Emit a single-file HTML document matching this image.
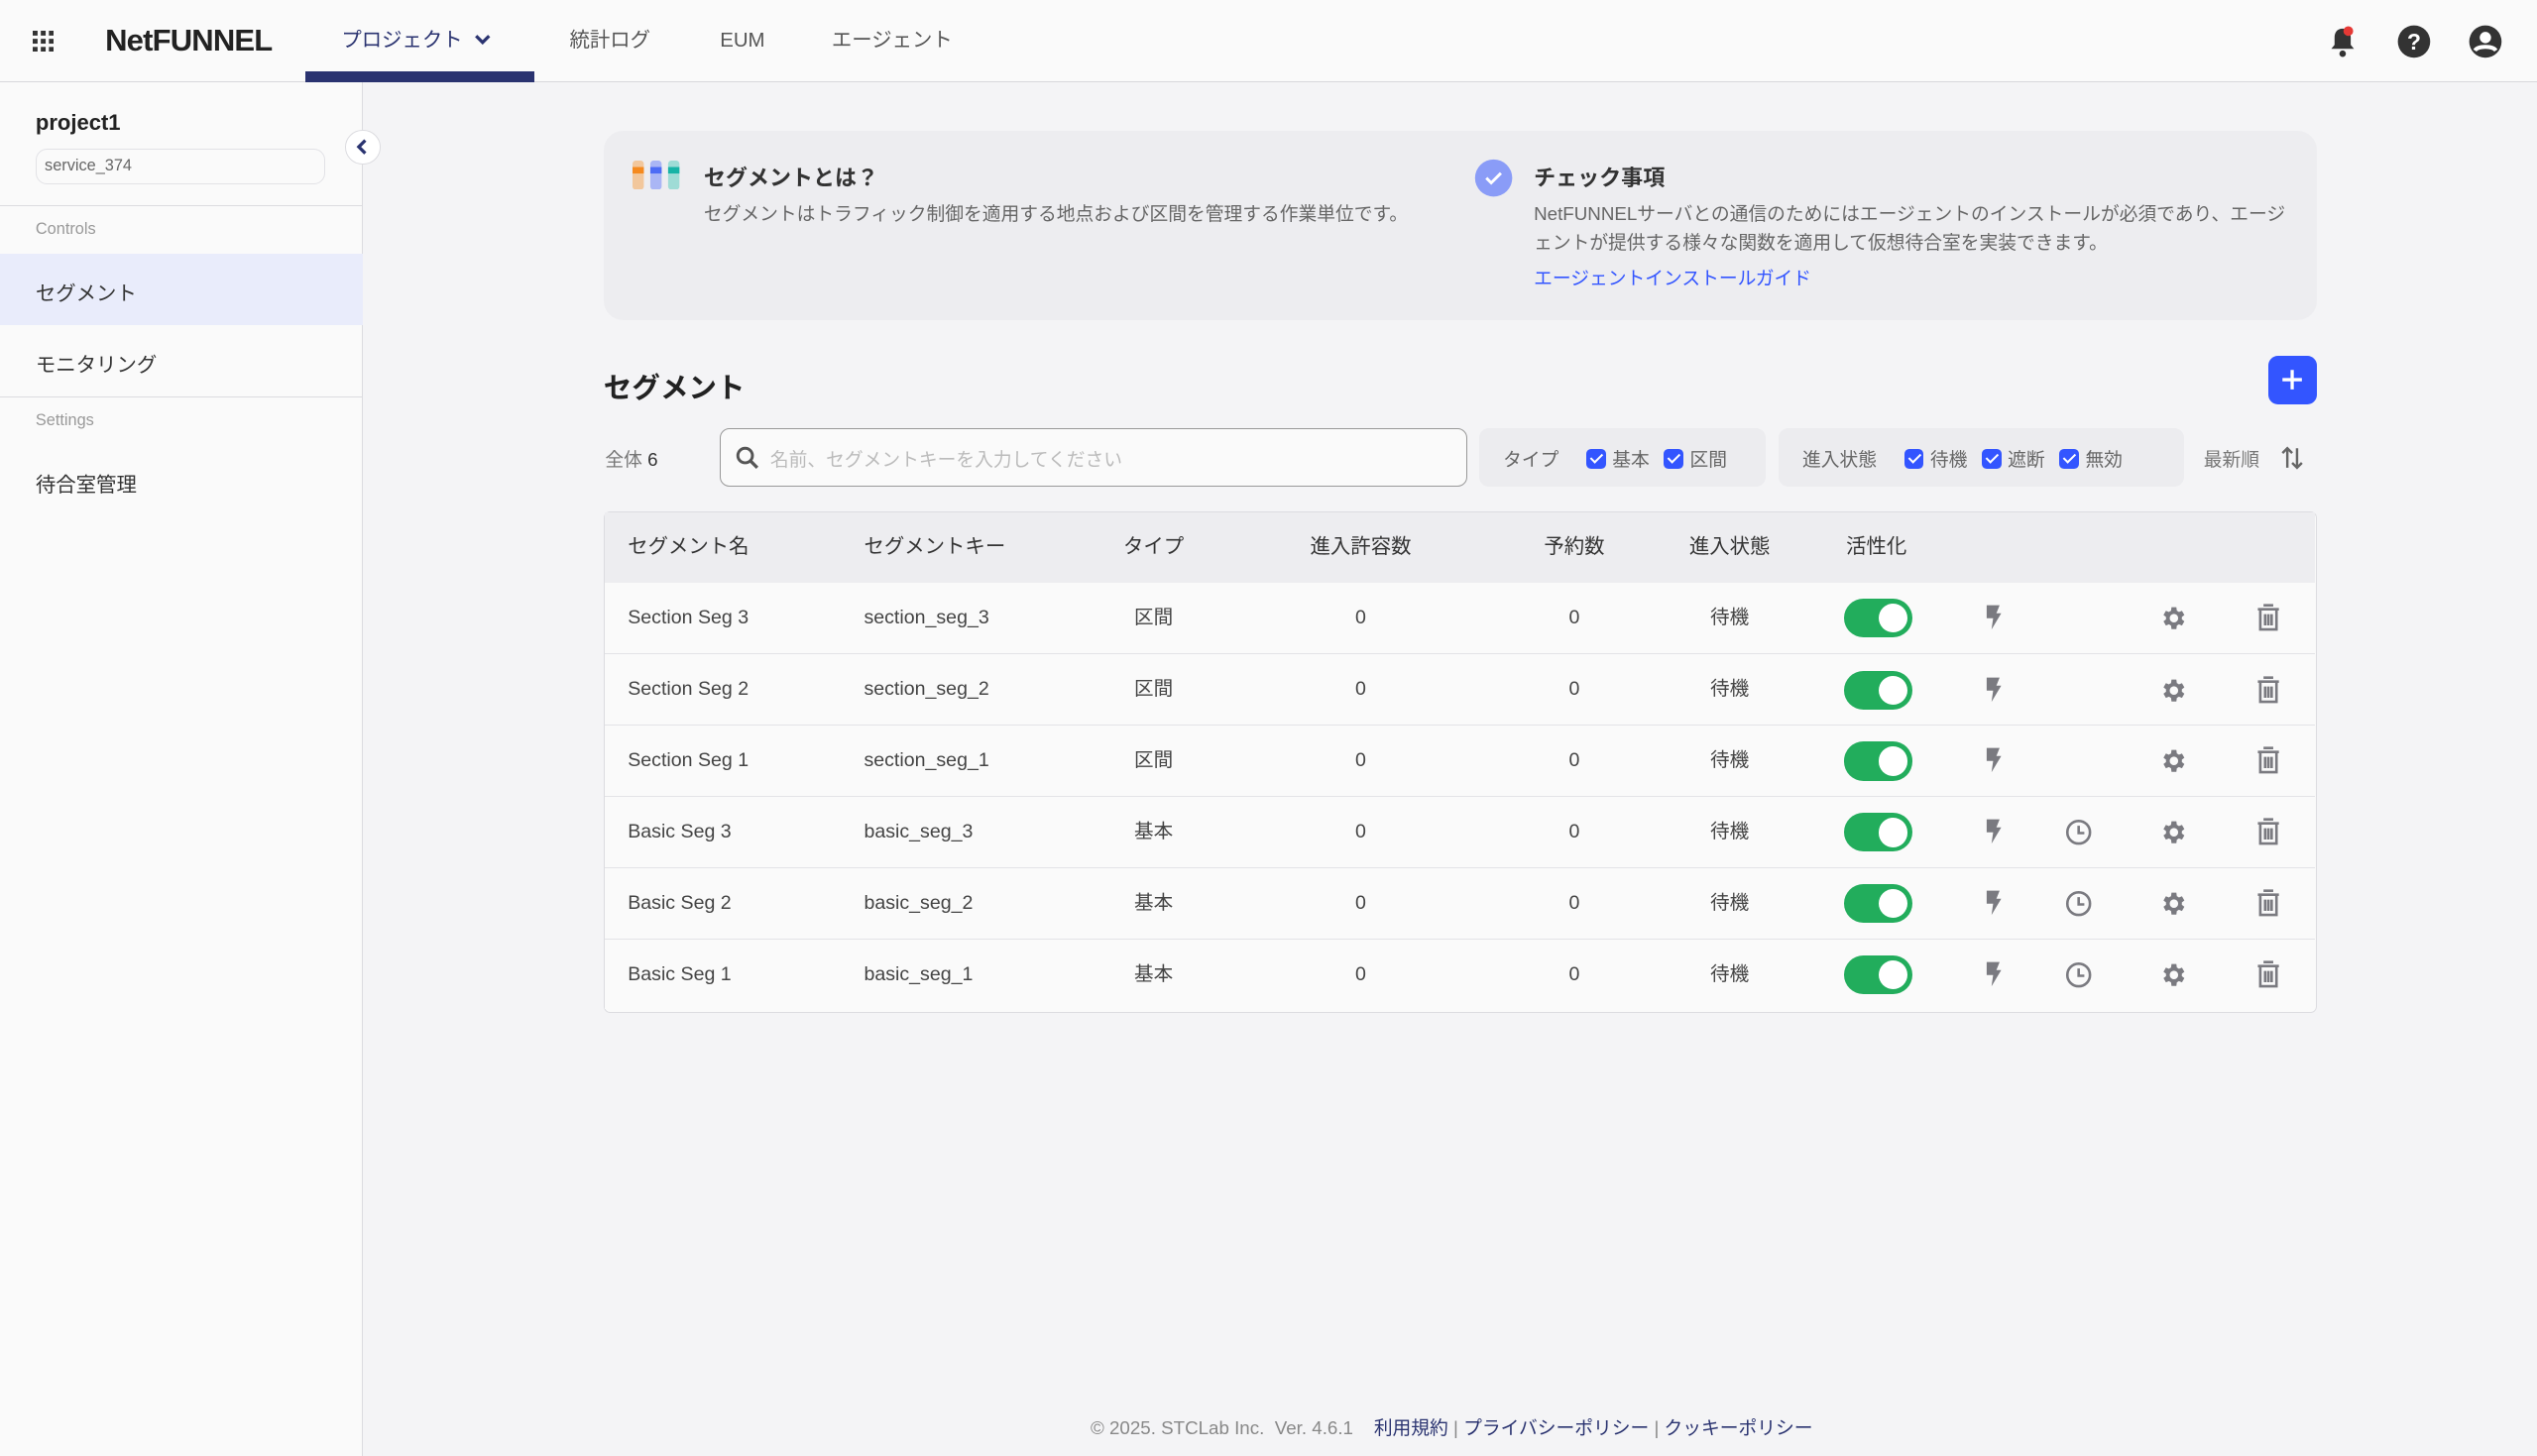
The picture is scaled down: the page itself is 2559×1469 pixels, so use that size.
<!DOCTYPE html>
<html><head><meta charset="utf-8"><style>
*{box-sizing:border-box;margin:0;padding:0}
html,body{width:2559px;height:1469px;overflow:hidden;background:#f4f4f6}
#w{zoom:1.632;width:1568px;height:900px;position:relative;font-family:"Liberation Sans","Noto Sans CJK JP",sans-serif;color:#333;font-size:13px}
.a{position:absolute}
.hdr{left:0;top:0;width:1568px;height:51px;background:#fafafa;border-bottom:1px solid #d8d8dc}
.side{left:0;top:51px;width:224px;height:849px;background:#fafafa;border-right:1px solid #dcdce0}
.nav{font-size:12.5px;color:#555;line-height:16px}
.row{left:374px;width:1057px;height:44px;border-top:1px solid #e3e3e7;background:#fafafa}
.row span{position:absolute;top:0;line-height:44px;font-size:12px;color:#444}
.c{transform:translateX(-50%)}
.tg{position:absolute;left:766px;top:10px;width:42px;height:24px;border-radius:12px;background:#22ad5c}
.tg:after{content:"";position:absolute;right:3px;top:3px;width:18px;height:18px;border-radius:50%;background:#fff}
.ic{position:absolute;top:13px}
.cb{display:inline-block;width:12px;height:12px;border:1.5px solid #3355ff;border-radius:3px;background:#3355ff;vertical-align:-2px;margin:0 4px 0 10px;position:relative}
.cb:after{content:"";position:absolute;left:3px;top:0px;width:3px;height:6px;border:solid #fff;border-width:0 1.3px 1.3px 0;transform:rotate(45deg)}
.th{position:absolute;top:330px;font-size:12.5px;color:#333;line-height:16px}
</style></head><body><div id="w">
<div class="a hdr"></div>
<svg class="a" style="left:20px;top:19px" width="13" height="13"><g fill="#333"><rect x="0" y="0" width="3" height="3"/><rect x="5" y="0" width="3" height="3"/><rect x="10" y="0" width="3" height="3"/><rect x="0" y="5" width="3" height="3"/><rect x="5" y="5" width="3" height="3"/><rect x="10" y="5" width="3" height="3"/><rect x="0" y="10" width="3" height="3"/><rect x="5" y="10" width="3" height="3"/><rect x="10" y="10" width="3" height="3"/></g></svg>
<div class="a" style="left:65px;top:14px;font-size:19px;font-weight:bold;color:#222;letter-spacing:-0.5px">NetFUNNEL</div>
<div class="a nav" style="left:211px;top:17px;color:#2a3370">プロジェクト</div>
<svg class="a" style="left:292px;top:20px" width="12" height="10"><path d="M2 2l4 4 4-4" stroke="#2a3370" stroke-width="2" fill="none"/></svg>
<div class="a" style="left:189px;top:44px;width:141px;height:7px;background:#2a3370"></div>
<div class="a nav" style="left:352px;top:17px">統計ログ</div>
<div class="a nav" style="left:445px;top:17px">EUM</div>
<div class="a nav" style="left:514px;top:17px">エージェント</div>
<svg class="a" style="left:1437px;top:15px" width="22" height="22"><path d="M11 3c-3.5 0-5 2.5-5 5.5v4.5l-2 2.5h14l-2-2.5V8.5C16 5.5 14.5 3 11 3z" fill="#333"/><circle cx="11" cy="18.5" r="2" fill="#333"/><circle cx="14.5" cy="4.5" r="3" fill="#e53935"/></svg>
<svg class="a" style="left:1481px;top:15px" width="22" height="22"><circle cx="11" cy="11" r="10" fill="#333"/><text x="11" y="16" font-size="14" font-weight="bold" fill="#fff" text-anchor="middle" font-family="Liberation Sans">?</text></svg>
<svg class="a" style="left:1525px;top:15px" width="22" height="22"><circle cx="11" cy="11" r="10" fill="#333"/><circle cx="11" cy="8.5" r="3.5" fill="#fff"/><path d="M4.5 16.5c2-3 11-3 13 0" stroke="#fff" stroke-width="2.4" fill="none"/></svg>

<div class="a side"></div>
<div class="a" style="left:22px;top:68px;font-size:13.5px;font-weight:bold;color:#222">project1</div>
<div class="a" style="left:22px;top:92px;width:179px;height:22px;border:1px solid #e2e2e6;border-radius:7px;font-size:10px;color:#666;padding:4px 5px">service_374</div>
<div class="a" style="left:213px;top:80px;width:22px;height:22px;border-radius:50%;border:1px solid #dcdce0;background:#fff"></div>
<svg class="a" style="left:219px;top:86px" width="10" height="10"><path d="M7 1L3 5l4 4" stroke="#2a3370" stroke-width="2" fill="none"/></svg>
<div class="a" style="left:0;top:127px;width:224px;border-top:1px solid #dcdce0"></div>
<div class="a" style="left:22px;top:136px;font-size:10px;color:#999">Controls</div>
<div class="a" style="left:0;top:157px;width:224px;height:44px;background:#e9ecfb"></div>
<div class="a" style="left:22px;top:171px;font-size:12.5px;color:#333">セグメント</div>
<div class="a" style="left:22px;top:215px;font-size:12.5px;color:#333">モニタリング</div>
<div class="a" style="left:0;top:245px;width:224px;border-top:1px solid #dcdce0"></div>
<div class="a" style="left:22px;top:254px;font-size:10px;color:#999">Settings</div>
<div class="a" style="left:22px;top:289px;font-size:12.5px;color:#333">待合室管理</div>

<div class="a" style="left:373px;top:81px;width:1059px;height:117px;background:#ededf0;border-radius:12px"></div>
<svg class="a" style="left:391px;top:99px" width="30" height="18"><rect x="0" y="0" width="7" height="18" rx="2" fill="#f2c79c"/><rect x="0" y="4" width="7" height="4" fill="#f58a1f"/><rect x="11" y="0" width="7" height="18" rx="2" fill="#aab6f5"/><rect x="11" y="4" width="7" height="4" fill="#4d6cf5"/><rect x="22" y="0" width="7" height="18" rx="2" fill="#9fdcd6"/><rect x="22" y="4" width="7" height="4" fill="#18b3a6"/></svg>
<div class="a" style="left:435px;top:99px;font-size:13.5px;font-weight:bold;color:#333">セグメントとは？</div>
<div class="a" style="left:435px;top:123px;font-size:11.5px;color:#666">セグメントはトラフィック制御を適用する地点および区間を管理する作業単位です。</div>
<svg class="a" style="left:911px;top:98px" width="24" height="24"><circle cx="12" cy="12" r="11.5" fill="#8a9cf7"/><path d="M7.5 12l3 3 6-6" stroke="#fff" stroke-width="1.8" fill="none"/></svg>
<div class="a" style="left:948px;top:99px;font-size:13.5px;font-weight:bold;color:#333">チェック事項</div>
<div class="a" style="left:948px;top:123px;width:465px;font-size:11.5px;color:#666;line-height:18px">NetFUNNELサーバとの通信のためにはエージェントのインストールが必須であり、エージェントが提供する様々な関数を適用して仮想待合室を実装できます。</div>
<div class="a" style="left:948px;top:163px;font-size:11.5px;color:#3355ff">エージェントインストールガイド</div>

<div class="a" style="left:373px;top:226px;font-size:17.5px;font-weight:bold;color:#222">セグメント</div>
<div class="a" style="left:1402px;top:220px;width:30px;height:30px;background:#3355ff;border-radius:6px"></div>
<svg class="a" style="left:1409px;top:227px" width="16" height="16"><path d="M8 2v12M2 8h12" stroke="#fff" stroke-width="2"/></svg>

<div class="a" style="left:374px;top:275px;font-size:11.5px;color:#777">全体 <b style="color:#333;font-weight:normal">6</b></div>
<div class="a" style="left:445px;top:265px;width:462px;height:36px;border:1px solid #999;border-radius:6px;background:#fafafa"></div>
<svg class="a" style="left:454px;top:275px" width="16" height="16"><circle cx="6.5" cy="6.5" r="4.5" stroke="#555" stroke-width="1.8" fill="none"/><path d="M10 10l4 4" stroke="#555" stroke-width="2"/></svg>
<div class="a" style="left:476px;top:275px;font-size:11.5px;color:#bbb">名前、セグメントキーを入力してください</div>
<div class="a" style="left:914px;top:265px;width:177px;height:36px;background:#ececef;border-radius:6px"></div>
<div class="a" style="left:929px;top:275px;font-size:11.5px;color:#666">タイプ<span class="cb" style="margin-left:17px"></span>基本<span class="cb" style="margin-left:9px"></span>区間</div>
<div class="a" style="left:1099px;top:265px;width:251px;height:36px;background:#ececef;border-radius:6px"></div>
<div class="a" style="left:1114px;top:275px;font-size:11.5px;color:#666">進入状態<span class="cb" style="margin-left:17px"></span>待機<span class="cb" style="margin-left:9px"></span>遮断<span class="cb" style="margin-left:9px"></span>無効</div>
<div class="a" style="left:1362px;top:275px;font-size:11.5px;color:#777">最新順</div>
<svg class="a" style="left:1409px;top:275px" width="16" height="16"><path d="M5 14V2M2 5l3-3 3 3M11 2v12M8 11l3 3 3-3" stroke="#666" stroke-width="1.5" fill="none"/></svg>

<div class="a" style="left:373px;top:316px;width:1059px;height:310px;border:1px solid #dcdce0;border-radius:4px;background:#fafafa"></div>
<div class="a" style="left:374px;top:317px;width:1057px;height:43px;background:#ededf0"></div>
<div class="th" style="left:388px">セグメント名</div>
<div class="th" style="left:534px">セグメントキー</div>
<div class="th c" style="left:713px">タイプ</div>
<div class="th c" style="left:841px">進入許容数</div>
<div class="th c" style="left:973px">予約数</div>
<div class="th c" style="left:1069px">進入状態</div>
<div class="th" style="left:1141px">活性化</div>

<div id="rows"></div>
</div>
<script>
var d=[["Section Seg 3","section_seg_3","区間",0],["Section Seg 2","section_seg_2","区間",0],["Section Seg 1","section_seg_1","区間",0],["Basic Seg 3","basic_seg_3","基本",1],["Basic Seg 2","basic_seg_2","基本",1],["Basic Seg 1","basic_seg_1","基本",1]];
var h="";
var bolt='<svg class="ic" style="left:851px" width="14" height="18"><path d="M3 1h8L9 6h3l-6 10 1-7H3z" fill="#7a7a80"/></svg>';
var clock='<svg class="ic" style="left:902px" width="18" height="18"><circle cx="9" cy="9" r="7" stroke="#7a7a80" stroke-width="1.6" fill="none"/><path d="M9 5v4.5h3.5" stroke="#7a7a80" stroke-width="1.6" fill="none"/></svg>';
var gear='<svg class="ic" style="left:960px" width="18" height="18" viewBox="0 0 24 24"><path fill="#7a7a80" d="M19.4 13a7.5 7.5 0 000-2l2.1-1.6-2-3.5-2.5 1a7 7 0 00-1.7-1L14.9 3h-4l-.4 2.9a7 7 0 00-1.7 1l-2.5-1-2 3.5L6.4 11a7.5 7.5 0 000 2l-2.1 1.6 2 3.5 2.5-1a7 7 0 001.7 1l.4 2.9h4l.4-2.9a7 7 0 001.7-1l2.5 1 2-3.5zM12.9 15.5a3.5 3.5 0 110-7 3.5 3.5 0 010 7z"/></svg>';
var trash='<svg class="ic" style="left:1020px" width="16" height="18"><path d="M5 1h6M1.5 3.5h13M3 3.5v12.5h10V3.5M6 6.5v7M8 6.5v7M10 6.5v7" stroke="#7a7a80" stroke-width="1.6" fill="none"/></svg>';
d.forEach(function(r,i){
h+='<div class="a row" style="top:'+(360+i*44)+'px'+(i==0?';border-top:none':'')+'"><span style="left:14px">'+r[0]+'</span><span style="left:160px">'+r[1]+'</span><span class="c" style="left:339px">'+r[2]+'</span><span class="c" style="left:467px">0</span><span class="c" style="left:599px">0</span><span class="c" style="left:695px">待機</span><div class="tg"></div>'+bolt+(r[3]?clock:'')+gear+trash+'</div>';
});
document.getElementById('rows').outerHTML=h;
</script>
<div style="position:absolute;left:0;top:0;zoom:1.632;width:1568px">
<div style="position:absolute;left:674px;top:874px;font-size:11.5px;color:#888;font-family:'Liberation Sans','Noto Sans CJK JP',sans-serif;white-space:nowrap">© 2025. STCLab Inc. &nbsp;Ver. 4.6.1 &nbsp;&nbsp;&nbsp;<span style="color:#2a3370">利用規約</span> | <span style="color:#2a3370">プライバシーポリシー</span> | <span style="color:#2a3370">クッキーポリシー</span></div>
</div>
</body></html>
